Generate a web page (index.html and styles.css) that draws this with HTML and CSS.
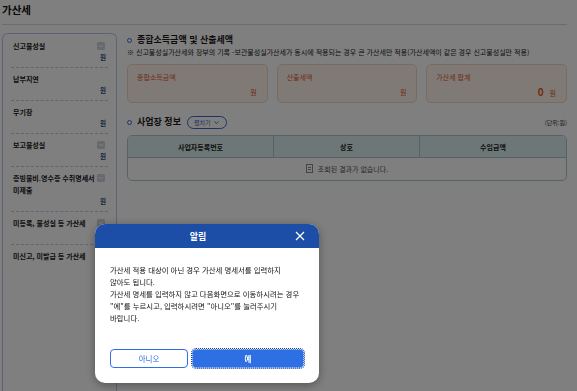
FILE: index.html
```html
<!DOCTYPE html>
<html lang="ko">
<head>
<meta charset="utf-8">
<title>가산세</title>
<link rel="stylesheet" href="styles.css">
</head>
<body>
<div class="page">
  <h1 class="page-title">가산세</h1>
  <div class="page-body">
    <ul class="side">
      <li class="side-item">
        <div class="side-head"><span>신고불성실</span><button class="side-toggle"><svg width="6" height="4" viewBox="0 0 6 4"><path d="M1 1l2 2 2-2" fill="none" stroke="#fff" stroke-width="1"/></svg></button></div>
        <div class="side-amt">원</div>
      </li>
      <li class="side-item">
        <div class="side-head"><span>납부지연</span></div>
        <div class="side-amt">원</div>
      </li>
      <li class="side-item">
        <div class="side-head"><span>무기장</span></div>
        <div class="side-amt">원</div>
      </li>
      <li class="side-item">
        <div class="side-head"><span>보고불성실</span><button class="side-toggle"><svg width="6" height="4" viewBox="0 0 6 4"><path d="M1 1l2 2 2-2" fill="none" stroke="#fff" stroke-width="1"/></svg></button></div>
        <div class="side-amt">원</div>
      </li>
      <li class="side-item">
        <div class="side-head"><span>증빙불비.영수증 수취명세서<br>미제출</span><button class="side-toggle"><svg width="6" height="4" viewBox="0 0 6 4"><path d="M1 1l2 2 2-2" fill="none" stroke="#fff" stroke-width="1"/></svg></button></div>
        <div class="side-amt">원</div>
      </li>
      <li class="side-item">
        <div class="side-head"><span>미등록, 불성실 등 가산세</span><button class="side-toggle"><svg width="6" height="4" viewBox="0 0 6 4"><path d="M1 1l2 2 2-2" fill="none" stroke="#fff" stroke-width="1"/></svg></button></div>
        <div class="side-amt">원</div>
      </li>
      <li class="side-item">
        <div class="side-head"><span>미신고, 미발급 등 가산세</span><button class="side-toggle"><svg width="6" height="4" viewBox="0 0 6 4"><path d="M1 1l2 2 2-2" fill="none" stroke="#fff" stroke-width="1"/></svg></button></div>
        <div class="side-amt">원</div>
      </li>
    </ul>

    <div class="main">
      <h2 class="sec-title"><i class="dot"></i>종합소득금액 및 산출세액</h2>
      <p class="note">※ 신고불성실가산세와 장부의 기록 -보관불성실가산세가 동시에 적용되는 경우 큰 가산세만 적용(가산세액이 같은 경우 신고불성실만 적용)</p>
      <div class="cards">
        <div class="card">
          <div class="card-label">종합소득금액</div>
          <div class="card-val">원</div>
        </div>
        <div class="card">
          <div class="card-label">산출세액</div>
          <div class="card-val">원</div>
        </div>
        <div class="card">
          <div class="card-label">가산세 합계</div>
          <div class="card-val"><b class="card-num">0</b>원</div>
        </div>
      </div>

      <div class="sec-row">
        <h2 class="sec-title"><i class="dot"></i>사업장 정보
          <button class="pill">펼치기<svg width="5" height="3" viewBox="0 0 5 3"><path d="M.5.5l2 2 2-2" fill="none" stroke="#2f5fc4" stroke-width=".9"/></svg></button>
        </h2>
        <span class="unit">(단위:원)</span>
      </div>
      <table class="grid">
        <thead>
          <tr><th>사업자등록번호</th><th>상호</th><th>수임금액</th></tr>
        </thead>
        <tbody>
          <tr><td colspan="3" class="empty"><svg width="7" height="9" viewBox="0 0 7 9"><rect x=".5" y=".5" width="6" height="8" fill="none" stroke="#8a8a8a"/><path d="M2 3.5h3M2 5.5h3" stroke="#8a8a8a"/></svg>조회된 결과가 없습니다.</td></tr>
        </tbody>
      </table>
    </div>
  </div>
</div>

<div class="dim"></div>

<div class="modal">
  <div class="modal-head">
    <span class="modal-title">알림</span>
    <button class="modal-close"><svg width="10" height="10" viewBox="0 0 10 10"><path d="M1 1l8 8M9 1L1 9" stroke="#fff" stroke-width="1.2"/></svg></button>
  </div>
  <div class="modal-body">
    <p>가산세 적용 대상이 아닌 경우 가산세 명세서를 입력하지<br>않아도 됩니다.<br>가산세 명세를 입력하지 않고 다음화면으로 이동하시려는 경우<br>"예"를 누르시고, 입력하시려면 "아니오"를 눌러주시기<br>바랍니다.</p>
  </div>
  <div class="modal-btns">
    <button class="btn btn-no">아니오</button>
    <button class="btn btn-yes">예</button>
  </div>
</div>
</body>
</html>
```

FILE: styles.css
```css
*{margin:0;padding:0;box-sizing:border-box;}
ul,li{list-style:none;}
button{font-family:inherit;border:0;background:none;cursor:pointer;}
html,body{overflow:hidden;}
body{font-family:"Noto Sans CJK KR","Noto Sans",sans-serif;color:#222;background:#fff;width:577px;height:391px;}

.page{padding:0 10px 0 2px;}
.page-title{font-size:10.5px;font-weight:700;line-height:20px;padding-bottom:4px;border-bottom:1px solid #d6d8de;color:#111;}
.page-body{display:flex;gap:10px;margin-top:8px;}

.side{width:115px;flex:none;height:358px;border:1px solid #b9c8e8;border-bottom:0;border-radius:6px 6px 0 0;padding:1px 8px 0;}
.side-item{padding:5px 0 5px 2px;border-bottom:1px dashed #c4c8d0;}
.side-item:last-child{border-bottom:0;}
.side-head{display:flex;justify-content:space-between;align-items:flex-start;font-size:7px;font-weight:700;line-height:12px;color:#1a1a1a;}
.side-toggle{width:8px;height:8px;margin:2px 3px 0 0;border-radius:1.5px;background:#cdd2dd;display:flex;align-items:center;justify-content:center;flex:none;}
.side-amt{font-size:6.5px;line-height:10px;text-align:right;padding-right:2px;color:#2d4b85;font-weight:700;}

.main{flex:1;min-width:0;}
.sec-title{display:flex;align-items:center;gap:5px;font-size:9px;font-weight:700;line-height:14px;color:#1a1a1a;}
.dot{width:5px;height:5px;border:1px solid #3b6bd6;border-radius:50%;flex:none;}
.note{font-size:7px;line-height:10px;color:#1a1a1a;white-space:nowrap;}

.cards{display:grid;grid-template-columns:repeat(3,1fr);gap:9px;margin-top:7px;}
.card{height:39px;border:1px solid #f3d6c2;background:#fff5ec;border-radius:5px;padding:7px 10px 0 9px;color:#e2571f;font-size:7px;}
.card-label{line-height:10px;}
.card-val{margin-top:4px;line-height:12px;text-align:right;}
.card-num{font-size:10px;font-weight:700;margin-right:6px;}

.sec-row{display:flex;justify-content:space-between;align-items:center;margin-top:12px;}
.pill{display:flex;align-items:center;gap:4px;height:13px;margin-left:1px;padding:0 7px 0 6px;border:1px solid #3a68c9;border-radius:7px;font-size:6px;color:#2f5fc4;font-weight:400;}
.unit{font-size:6px;color:#333;}

.grid{width:100%;margin-top:6px;border-collapse:separate;border-spacing:0;border:1px solid #a9c9cc;border-radius:5px;overflow:hidden;table-layout:fixed;font-size:7px;}
.grid th{height:22px;background:#dcefee;border-bottom:1px solid #a9c9cc;border-right:1px solid #a9c9cc;font-weight:700;color:#222;}
.grid th:last-child{border-right:0;}
.grid td{height:22px;text-align:center;color:#555;}
.empty svg{vertical-align:-1px;margin-right:5px;}

.dim{position:fixed;inset:0;background:rgba(0,0,0,.5);}

.modal{position:fixed;left:95px;top:224px;width:224px;height:159px;background:#fff;border-radius:10px;overflow:hidden;box-shadow:0 2px 10px rgba(0,0,0,.35);}
.modal-head{height:24px;background:#1d4ea7;display:flex;align-items:center;padding:0 14px 0 15px;color:#fff;}
.modal-title{flex:1;text-align:center;font-size:9px;font-weight:700;}
.modal-close{display:flex;margin-left:9px;width:10px;height:10px;}
.modal-body{height:101px;padding:16px 15px 0;font-size:7.4px;line-height:12px;color:#111;}
.modal-btns{display:flex;gap:4px;padding:0 15px;}
.btn{height:19px;border-radius:4px;font-size:7.5px;}
.btn-no{width:78px;border:1px solid #2f6fe4;color:#2f6fe4;background:#fff;}
.btn-yes{flex:1;background:#2f6fe4;color:#fff;font-weight:700;border:1px dotted #b9cff6;outline:1px dotted #1a3e8c;}
```
